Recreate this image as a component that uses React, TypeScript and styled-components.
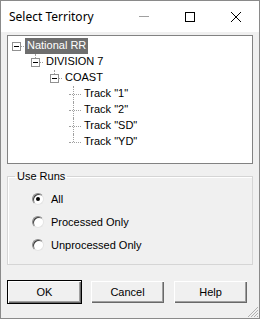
import React from 'react';
import styled, { createGlobalStyle } from 'styled-components';

const GlobalStyle = createGlobalStyle`
  * { box-sizing: border-box; }
  html, body { margin: 0; padding: 0; background: #f0f0f0; }
  body { font-family: "Liberation Sans", Arial, sans-serif; font-size: 11px; color: #000; }
`;

const Window = styled.div`
  width: 260px;
  height: 319px;
  border: 1px solid #8a8a8a;
  background: #f0f0f0;
  display: flex;
  flex-direction: column;
  position: relative;
`;

const TitleBar = styled.div`
  height: 31px;
  background: #fff;
  display: flex;
  align-items: center;
`;

const Title = styled.div`
  flex: 1;
  padding-left: 8px;
  font-family: "Noto Sans", "Liberation Sans", sans-serif;
  font-size: 12px;
  color: #000;
  padding-bottom: 1px;
`;

const CaptionButton = styled.div`
  width: 46px;
  height: 31px;
  display: flex;
  align-items: center;
  justify-content: center;
`;

const Body = styled.div`
  flex: 1;
  padding: 3px 6px 0 6px;
  display: flex;
  flex-direction: column;
`;

const TreeBox = styled.div`
  height: 129px;
  background: #fff;
  border: 1px solid #828282;
  padding-top: 2px;
`;

const Row = styled.div<{ level: number }>`
  position: relative;
  height: 16px;
  display: flex;
  align-items: center;
  padding-left: ${({ level }) => 4 + level * 19}px;
`;

const Expander = styled.div`
  width: 9px;
  height: 9px;
  border: 1px solid #919191;
  background: #fff;
  position: relative;
  flex-shrink: 0;
  &::after {
    content: '';
    position: absolute;
    left: 1px;
    top: 3px;
    width: 5px;
    height: 1px;
    background: #000;
  }
`;

const HLine = styled.div<{ w: number }>`
  width: ${({ w }) => w}px;
  height: 0;
  border-top: 1px dotted #a0a0a0;
  flex-shrink: 0;
`;

const VLine = styled.div<{ x: number; top: number; h: number }>`
  position: absolute;
  left: ${({ x }) => x}px;
  top: ${({ top }) => top}px;
  height: ${({ h }) => h}px;
  width: 0;
  border-left: 1px dotted #a0a0a0;
`;

const Label = styled.span<{ selected?: boolean }>`
  margin-left: 1px;
  padding: 1px 2px 2px 2px;
  line-height: 13px;
  white-space: nowrap;
  background: ${({ selected }) => (selected ? '#6e6e6e' : 'transparent')};
  color: ${({ selected }) => (selected ? '#fff' : '#000')};
`;

const Group = styled.fieldset`
  margin: 6px 0 0 0;
  padding: 0;
  height: 95px;
  border: 1px solid #d5d5d5;
  border-radius: 0;
  box-shadow: inset 1px 1px 0 #fff;
`;

const Legend = styled.legend`
  padding: 0 2px;
  margin-left: 7px;
  line-height: 13px;
`;

const RadioList = styled.div`
  padding: 4px 0 0 24px;
  display: flex;
  flex-direction: column;
`;

const RadioRow = styled.div`
  height: 23px;
  display: flex;
  align-items: center;
  gap: 7px;
`;

const RadioCircle = styled.div<{ checked?: boolean }>`
  width: 12px;
  height: 12px;
  border-radius: 50%;
  background: #fff;
  border: 1px solid;
  border-color: #8a8a8a #e4e4e4 #e4e4e4 #8a8a8a;
  box-shadow: inset 1px 1px 0 #404040;
  position: relative;
  &::after {
    content: '';
    display: ${({ checked }) => (checked ? 'block' : 'none')};
    position: absolute;
    left: 3px;
    top: 3px;
    width: 4px;
    height: 4px;
    border-radius: 50%;
    background: #000;
  }
`;

const ButtonRow = styled.div`
  margin-top: 15px;
  display: flex;
  gap: 8px;
`;

const Button = styled.div<{ isDefault?: boolean }>`
  width: 75px;
  height: 24px;
  display: flex;
  align-items: center;
  justify-content: center;
  background: #f0f0f0;
  border: 1px solid ${({ isDefault }) => (isDefault ? '#000' : 'transparent')};
  box-shadow: inset 1px 1px 0 #fff, inset -1px -1px 0 #696969, inset -2px -2px 0 #a0a0a0;
  padding-bottom: 1px;
`;

const Grip = styled.svg`
  position: absolute;
  right: 0;
  bottom: 0;
`;

const tracks = ['Track "1"', 'Track "2"', 'Track "SD"', 'Track "YD"'];

const App: React.FC = () => {
  return (
    <>
      <GlobalStyle />
      <Window>
        <TitleBar>
          <Title>Select Territory</Title>
          <CaptionButton>
            <svg width="10" height="1"><rect width="10" height="1" fill="#a0a0a0" /></svg>
          </CaptionButton>
          <CaptionButton>
            <svg width="10" height="10"><rect x="0.5" y="0.5" width="9" height="9" fill="none" stroke="#000" /></svg>
          </CaptionButton>
          <CaptionButton>
            <svg width="10" height="10"><path d="M0 0L10 10M10 0L0 10" stroke="#000" strokeWidth="1" /></svg>
          </CaptionButton>
        </TitleBar>
        <Body>
          <TreeBox>
            <Row level={0}>
              <Expander />
              <HLine w={3} />
              <Label selected>National RR</Label>
            </Row>
            <Row level={1}>
              <VLine x={27} top={0} h={4} />
              <Expander />
              <HLine w={3} />
              <Label>DIVISION 7</Label>
            </Row>
            <Row level={2}>
              <VLine x={46} top={0} h={4} />
              <Expander />
              <HLine w={3} />
              <Label>COAST</Label>
            </Row>
            {tracks.map((t, i) => (
              <Row key={t} level={3}>
                <VLine x={65} top={0} h={i === tracks.length - 1 ? 8 : 16} />
                <HLine w={12} />
                <Label>{t}</Label>
              </Row>
            ))}
          </TreeBox>
          <Group>
            <Legend>Use Runs</Legend>
            <RadioList>
              <RadioRow><RadioCircle checked />All</RadioRow>
              <RadioRow><RadioCircle />Processed Only</RadioRow>
              <RadioRow><RadioCircle />Unprocessed Only</RadioRow>
            </RadioList>
          </Group>
          <ButtonRow>
            <Button isDefault>OK</Button>
            <Button>Cancel</Button>
            <Button>Help</Button>
          </ButtonRow>
        </Body>
        <Grip width="12" height="12">
          <path d="M11 1L1 11M11 4L4 11M11 7L7 11M11 10L10 11" stroke="#b0b0b0" strokeWidth="1" />
        </Grip>
      </Window>
    </>
  );
};

export default App;
